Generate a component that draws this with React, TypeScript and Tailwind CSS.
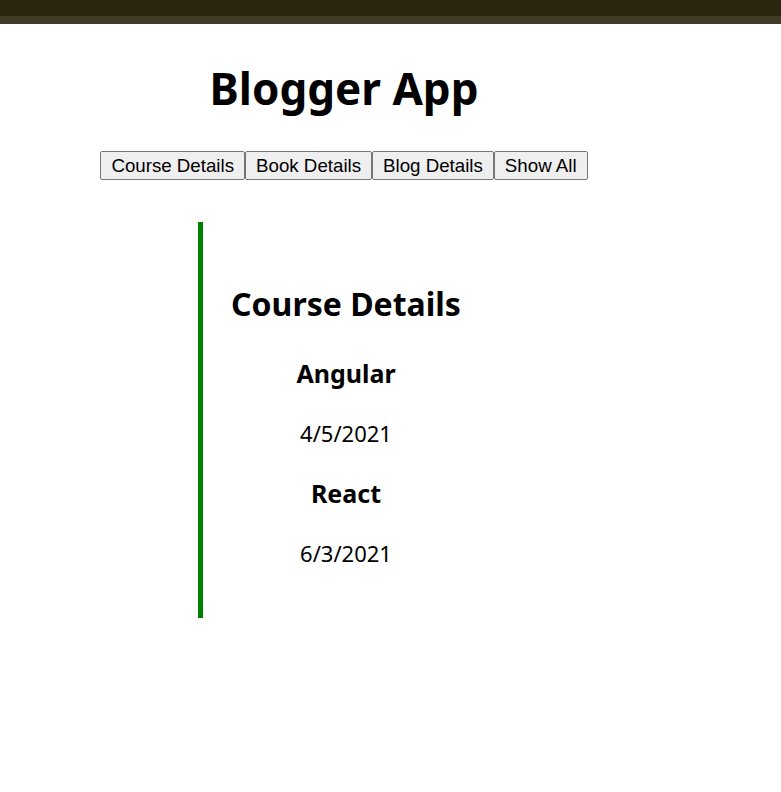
import React from "react";

const sans = { fontFamily: '"Noto Sans", "Open Sans", sans-serif' };

export default function App() {
  const buttons = ["Course Details", "Book Details", "Blog Details", "Show All"];
  return (
    <div className="w-full min-h-[792px] bg-white text-black" style={sans}>
      <div className="h-4 bg-[#2c2610]" />
      <div className="h-2 bg-[#403b22]" />
      <div className="w-[688px] flex flex-col items-center">
        <h1 className="mt-[42px] text-[44px] leading-[44px] font-bold">Blogger App</h1>
        <div className="mt-[41px] flex">
          {buttons.map((b) => (
            <button
              key={b}
              className="h-[29px] px-[10px] border border-[#767676] rounded-[2px] bg-[#efefef] text-[18.72px] leading-[21px] text-black"
              style={{ fontFamily: '"Liberation Sans", Arial, sans-serif' }}
            >
              {b}
            </button>
          ))}
        </div>
      </div>
      <div className="ml-[198px] mt-[42px] w-[291px] h-[396px] border-l-[5px] border-[#008000] flex flex-col items-center">
        <h2 className="mt-[66px] text-[32px] leading-[32px] font-bold">Course Details</h2>
        <h3 className="mt-[41px] text-[25px] leading-[25px] font-bold">Angular</h3>
        <p className="mt-[36px] text-[22px] leading-[22px]">4/5/2021</p>
        <h3 className="mt-[37px] text-[25px] leading-[25px] font-bold">React</h3>
        <p className="mt-[36px] text-[22px] leading-[22px]">6/3/2021</p>
      </div>
    </div>
  );
}
